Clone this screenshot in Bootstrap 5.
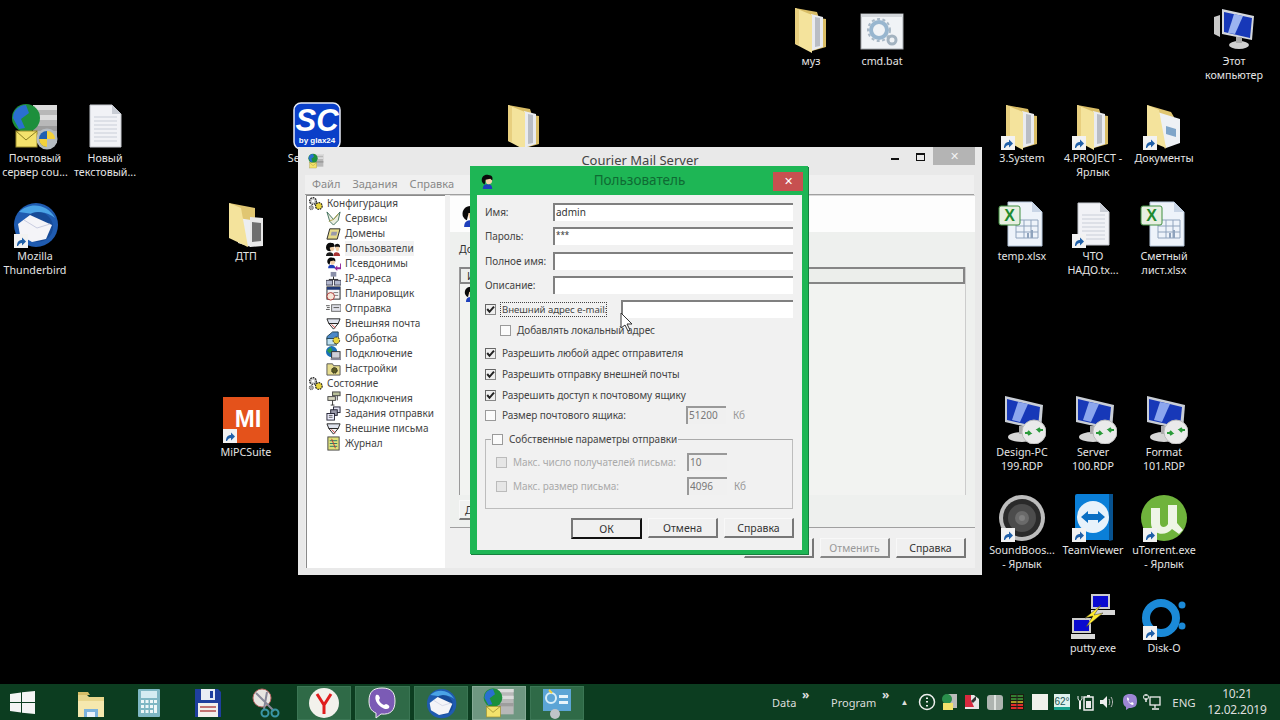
<!DOCTYPE html>
<html lang="ru">
<head>
<meta charset="utf-8">
<title>Courier Mail Server</title>
<link href="https://cdn.jsdelivr.net/npm/bootstrap@5.3.0/dist/css/bootstrap.min.css" rel="stylesheet">
<style>
html,body{height:100%;margin:0;background:#000;overflow:hidden}
.screen{width:1280px;height:720px;font-family:"Noto Sans","Liberation Sans",sans-serif;color:#333}
.desk{position:relative;flex:1 1 auto;background:#000;overflow:hidden}
.ditem{position:absolute;width:70px;color:#e4e4e4;font-size:10.7px;line-height:14px;text-align:center}
.ditem svg{width:48px;height:48px;display:block;margin-bottom:1px}
.ditem span{white-space:nowrap}
.cx35{left:0}.cx105{left:70px}.cx246{left:211px}.cx317{left:282px}.cx524{left:489px}.cx811{left:776px}.cx882{left:847px}.cx1022{left:987px}.cx1093{left:1058px}.cx1164{left:1129px}.cx1234{left:1199px}
.ry5{top:5px}.ry102{top:102px}.ry200{top:200px}.ry396{top:396px}.ry494{top:494px}.ry592{top:592px}
/* main window */
.mainwin{position:absolute;left:298px;top:147px;width:684px;height:428px;background:#e9e9e9;padding:0 7px 7px}
.wtitle{height:28px;display:grid;grid-template-columns:1fr auto 1fr;align-items:center;font-size:13px;color:#444;padding-bottom:0}
.wtext{margin-top:0}
.wtitle>svg{margin-left:3px}
.wctrl{height:18px;align-self:start;gap:0}
.wmin,.wmax{width:24px;height:18px;position:relative}
.wmin::after{content:"";position:absolute;left:6px;top:11px;width:8px;height:2px;background:#111}
.wmax::after{content:"";position:absolute;left:7px;top:6px;width:9px;height:8px;border:1px solid #111;border-top-width:2px}
.wclose{width:42px;height:18px;background:#b4b4b4;color:#f2f2f2;font-size:11px;line-height:18px;text-align:center;margin-right:0}
.wmenu{height:20px;background:#f0f0f0;border-bottom:1px solid #a0a0a0;font-size:11px;color:#888;padding-left:7px;gap:12px;margin-right:1px}
.wbody{height:373px;background:#f0f0f0}
.wtree{width:139px;margin-left:1px;background:#fff;border-left:1px solid #8a8a8a;border-top:1px solid #8a8a8a;padding:0;font-size:10px;color:#444;margin-bottom:0}
.wtree li{height:15px;display:flex;align-items:center;gap:4px;line-height:15px;padding-left:19px;white-space:nowrap}
.wtree li.troot{padding-left:1px;gap:4px}
.wtree li svg{width:15px;height:15px;flex:none}
.wtree li.tsel span{background:#f2f2f2}
.wpane{margin-left:5px;flex:1 1 auto;display:flex;flex-direction:column;background:#f0f0f0}
.phead{height:37px;background:#fdfdfd;padding:9px 0 0 10px;border-top:1px solid #d8d8d8}
.phead svg{width:22px;height:22px;display:block}
.psec{height:296px;background:#eef0ee;padding:10px 9px 0 9px;border-bottom:1px solid #a0a0a0;font-size:10.5px}
.plabel{height:15px;line-height:15px}
.plist{margin-top:10px;height:228px;border-left:1px solid #999;border-right:1px solid #ccc;background:#f2f3f1}
.plhead{height:17px;background:#eceeeb;border:2px solid #858585;border-left-width:1px;padding-left:6px;line-height:14px}
.plrow{padding:2px 0 0 3px}
.plrow svg{width:16px;height:16px;display:block}
.pbtns{gap:6px;padding-top:10px;justify-content:flex-end;padding-right:9px}
/* classic controls */
.xbtn{width:70px;height:20px;padding:0;border-radius:0;border:1px solid #f8f8f8;border-right:2px solid #777;border-bottom:2px solid #777;background:#f0f0f0;color:#333;font-size:10.5px;line-height:16px}
.xbtn:disabled{opacity:1;background:#f0f0f0;color:#999;border-color:#f8f8f8 #888 #888 #f8f8f8}
.xbtn.pdo{margin-top:5px;text-align:left;padding-left:5px}
.xdef{border:2px solid #111;border-top-color:#777;border-left-color:#777;border-right-width:2px;border-bottom-width:2px}
.xin{border-radius:0;border:0;border-top:2px solid #808080;border-left:2px solid #808080;padding:0 1px 2px;height:18px;min-height:0;font-size:10px;line-height:14px;color:#333;background:#fff;box-shadow:none}
.xin:disabled{background:#f0f0f0;color:#777;opacity:1;border-top-color:#999;border-left-color:#999}
.xin.xtiny{font-size:8px;padding-bottom:6px}
.xchk{width:11px;height:11px;margin:0;flex:none;float:none;border-radius:0!important;border:1px solid #9a9a9a;background-color:#fbfbfb;box-shadow:none}
.xchk:checked{background-color:#efefef;border-color:#888;border-top-color:#666;border-left-color:#666;background-size:11px;background-image:url("data:image/svg+xml,%3csvg xmlns='http://www.w3.org/2000/svg' viewBox='0 0 11 11'%3e%3cpath fill='none' stroke='%23222' stroke-width='2' d='M2.2 5l2.3 2.8L9 2.6'/%3e%3c/svg%3e")}
.xchk:disabled{opacity:1;background-color:#e6e6e6;border-color:#bbb}
/* dialog */
.dlg{position:absolute;left:470px;top:166px;width:338px;height:388px;background:#1eb655;padding:0 6px 4px 7px;box-shadow:1px 1px 0 #16803e}
.dtitle{height:29px;display:grid;grid-template-columns:1fr auto 1fr;font-size:13.5px;color:#0f6a33;align-items:center}
.dtitle svg{width:15px;height:15px;margin:1px 0 0 3px;display:block}
.dclose{width:30px;height:19px;background:#c75050;color:#fff;font-size:11px;line-height:18px;text-align:center;align-self:start;margin-top:1px;margin-right:-1px}
.dbody{height:355px;background:#f1f1f1;padding:8px 9px 0 8px;font-size:10px;letter-spacing:-.05px;color:#444;line-height:14px}
.drow{height:18px;margin-bottom:6.4px}
.drow label{width:68px;margin:0}
.drow .xin{width:240px}
.demail{height:18px;margin-top:-.5px}
.demail .xin{width:172px}
.dotted{outline:1px dotted #444;padding:0 1px;margin-left:5px;width:105px;white-space:nowrap;height:13px;line-height:13px;flex:none;font-size:9.6px}
.xlab{margin-left:6px;white-space:nowrap}
.dsub{height:14px;margin:5px 0 0 15px}
.dch{height:14px;margin-top:7px}
.dch1{margin-top:9px}
.dsize{height:18px;margin-top:4px}
.dsize .xin,.dgp .xin{width:40px;margin-left:auto}
.dkb{width:67px;padding-left:7px;color:#999;flex:none}
.dsize .xlab{width:185px}
.dgp{position:relative;margin-top:15px;height:70px;border:1px solid #bdbdbd;border-top-color:#aaa;padding:13px 0 0 10px;color:#aaa}
.dgl{position:absolute;left:5px;top:-8px;background:#f1f1f1;padding:0 1px;color:#444;gap:6px}
.dgr{height:18px;margin-bottom:6px}
.dgr .xlab{width:174px}
.dgr .xin{margin-left:0}
.dgr .dkb{width:auto}
.dbtns{gap:6px;margin-top:9px;padding-right:0;margin-right:-1px;justify-content:flex-end}
.dbtns .xdef{width:71px;height:21px}
.cursor{position:absolute;left:620px;top:312px;width:14px;height:20px}
/* taskbar */
.tbar{height:36px;flex:none;background:#0c3d20;color:#ddd;font-size:11px}
.tstart{width:46px;padding-left:10px}
.tstart svg{width:25px;height:23px;display:block}
.tgrip{width:4px;height:28px;background-image:radial-gradient(#4a7058 .6px,transparent .7px);background-size:2px 2px;flex:none}
.tgrip1{margin:0 10px 0 4px}
.ttask{width:54.25px;height:34px;margin-right:4px;margin-top:2px;display:flex;align-items:center;justify-content:center;flex:none}
.ttask svg{width:32px;height:32px;display:block}
.ton{background:#2f6a47;box-shadow:inset 0 0 0 1px #3b7654}
.tact{background:#6f9781;box-shadow:inset 0 0 0 1px #86aa96}
.ttray{margin-left:auto;width:520px;flex:none}
.tdata{width:30px;margin-left:8px;padding-top:2px}
.tprog{width:51px;margin-left:7px;padding-top:2px}
.tmore{width:18px;font-size:12px;line-height:10px;align-self:flex-start;margin-top:4px;font-weight:700;letter-spacing:-1px}
.tmore2{width:16px}
.tup{width:18px;text-align:center;font-size:8px;padding-left:0;padding-right:5px;color:#ddd}
.tslot{width:22.5px;display:flex;justify-content:center;flex:none}
.tslot svg{width:18px;height:18px;display:block}
.teng{width:41px;text-align:center;flex:none;padding-top:2px;font-size:11.5px}
.tclock{width:65px;text-align:center;line-height:16px;flex:none;font-size:12px;letter-spacing:-.2px}
</style>
</head>
<body>
<svg width="0" height="0" class="position-absolute">
<defs>
<symbol id="short" viewBox="0 0 14 14"><rect width="14" height="14" fill="#f2f2f2"/><path d="M3 12c0-4 2-6 5-6V3.500l4 4-4 4V9c-2 0-3 1-4 3z" fill="#1f5fa8"/></symbol>
<symbol id="folder" viewBox="0 0 48 48"><path d="M8 3l22 4 2 6 7 1v28l-14 4z" fill="#d9bd66"/><path d="M24 9l12 3v30l-12 4z" fill="#e9ebef"/><path d="M28 12l5 1v28l-5 1z" fill="#b9bdc4"/><path d="M8 3l17 7v38L8 39z" fill="#f4e39c"/><path d="M8 3l4 2v35l-4-1z" fill="#e8cf7f"/></symbol>
<symbol id="folderdoc" viewBox="0 0 48 48"><path d="M7 3l24 7 3 5v20l-9 12z" fill="#e0c672"/><path d="M14 9l26 8v24l-14 5z" fill="#eef1f5"/><path d="M26 24l10 3v8l-10-3z" fill="#7fa5c9"/><path d="M7 3l12 5 7 38L7 38z" fill="#f4e39c"/></symbol>
<symbol id="folderdtp" viewBox="0 0 48 48"><path d="M7 3l26 5v12l-8 27z" fill="#e0c672"/><path d="M16 18l13 2v27l-13-4z" fill="#eceef1"/><path d="M28 17l13 1v28l-13 1z" fill="#e8e8e8"/><path d="M30 22l9 1v18l-9 1z" fill="#6e6e6e"/><path d="M7 3l12 5 7 39L7 38z" fill="#f4e39c"/></symbol>
<symbol id="doc" viewBox="0 0 48 48"><path d="M9 3h22l9 9v33H9z" fill="#f1f2f6" stroke="#c5c8ce"/><path d="M31 3v9h9z" fill="#c8ccd4"/><path d="M13 15h23M13 19h23M13 23h23M13 27h23M13 31h23M13 35h23M13 39h23" stroke="#c9ced8"/></symbol>
<symbol id="xls" viewBox="0 0 48 48"><path d="M10 2h24l10 10v34H10z" fill="#eef3fa" stroke="#b7c8dd"/><path d="M34 2v10h10z" fill="#c9d5e6"/><path d="M18 20h22v18H18zM18 26h22M18 32h22M26 20v18M33 20v18" fill="none" stroke="#8fa3bd"/><path d="M29 38v-5h2v5zM33 38v-8h2v8z" fill="#8fa3bd"/><rect x="1" y="6" width="21" height="19" rx="2" fill="#e7efe1" stroke="#3f8f3f"/><text x="11.500" y="21" text-anchor="middle" font-family="Liberation Sans" font-weight="700" font-size="16" fill="#1e8a2f">X</text></symbol>
<symbol id="gearbat" viewBox="0 0 48 48"><rect x="3" y="9" width="42" height="35" fill="#f0f3f6" stroke="#a5a9ae"/><rect x="3" y="9" width="42" height="3" fill="#d2d6da"/><circle cx="21" cy="25" r="8" fill="none" stroke="#98b6cf" stroke-width="4"/><circle cx="21" cy="25" r="11" fill="none" stroke="#a8b8c6" stroke-width="2" stroke-dasharray="3 2.500"/><circle cx="34" cy="35" r="4" fill="none" stroke="#a3b3c0" stroke-width="3"/></symbol>
<symbol id="pc" viewBox="0 0 48 48"><path d="M4 12l6-2v22l-6-3z" fill="#c9c9c9"/><path d="M12 4l32 7-2 24-30-6z" fill="#d4d7dc"/><path d="M14 7l28 6-2 20-26-6z" fill="#1738b8"/><path d="M24 9l9 2-8 18-7-1z" fill="#9cb4f0"/><ellipse cx="29" cy="40" rx="10" ry="4" fill="#cfcfcf"/><path d="M26 32h6v6h-6z" fill="#aaa"/></symbol>
<symbol id="rdp" viewBox="0 0 48 48"><path d="M7 0l38 9-2 25-36-8z" fill="#c9ced6"/><path d="M9 3l33 8-2 20-31-7z" fill="#1738b8"/><path d="M20 6l10 2-8 18-8-2z" fill="#8ca6ee"/><ellipse cx="24" cy="41" rx="14" ry="5" fill="#d6d6d6"/><path d="M21 30h7v8h-7z" fill="#aaa"/><circle cx="36" cy="36" r="12" fill="#eaeaea" stroke="#bbb"/><path d="M27 37h5l-2-2M45 34h-5l2 2M33 37l-3 2M39 34l3-2" stroke="#2a9a3a" stroke-width="2" fill="none"/></symbol>
<symbol id="speaker" viewBox="0 0 48 48"><circle cx="24" cy="24" r="23" fill="#bdbdbd"/><circle cx="24" cy="24" r="19" fill="#2a2a2a"/><circle cx="24" cy="24" r="14" fill="#4c4c4c"/><circle cx="24" cy="24" r="7" fill="#6a6a6a"/><circle cx="24" cy="24" r="3" fill="#808080"/></symbol>
<symbol id="tv" viewBox="0 0 48 48"><rect x="6" y="0" width="38" height="46" rx="2" fill="#0a7fd8"/><path d="M40 0h4v46l-4 1z" fill="#07528f"/><circle cx="24" cy="23" r="16" fill="#e7f2fb"/><path d="M12 23l7-6v3h10v-3l7 6-7 6v-3H19v3z" fill="#0a6fc4"/></symbol>
<symbol id="ut" viewBox="0 0 48 48"><circle cx="24" cy="24" r="23" fill="#6fb33c"/><path d="M11 14h9v15c0 5 6 5 8 1V11h9v18l6 7-4 4-7-5c-6 8-21 6-21-6z" fill="#eef5e6"/></symbol>
<symbol id="putty" viewBox="0 0 48 48"><rect x="22" y="2" width="19" height="15" fill="#ccc"/><rect x="24" y="4" width="15" height="11" fill="#0a0ad0"/><rect x="22" y="18" width="24" height="5" fill="#d8d8d8"/><rect x="3" y="26" width="19" height="15" fill="#ccc"/><rect x="5" y="28" width="15" height="11" fill="#0a0ad0"/><rect x="2" y="42" width="24" height="5" fill="#d8d8d8"/><path d="M32 13L16 26l8-2-7 11 17-14-9 2z" fill="#ffea30" stroke="#333" stroke-width=".5"/></symbol>
<symbol id="disko" viewBox="0 0 48 48"><circle cx="21" cy="26" r="15" fill="none" stroke="#1b8ad8" stroke-width="8"/><circle cx="42" cy="13" r="3.500" fill="#1b8ad8"/><circle cx="42" cy="34" r="3.500" fill="#1b8ad8"/></symbol>
<symbol id="tbird" viewBox="0 0 48 48"><circle cx="25" cy="25" r="22" fill="#1f5bb0"/><path d="M8 12c10-10 28-9 36 6-6-5-14-7-22-4z" fill="#4aa3e6"/><circle cx="27" cy="27" r="15" fill="#164a97"/><path d="M7 24l12-9 22 10-6 14-14 3-12-7z" fill="#f4f4f8"/><path d="M13 20l13 8 13-4" fill="none" stroke="#c8cce0"/></symbol>
<symbol id="mailsrv" viewBox="0 0 48 48"><rect x="22" y="3" width="24" height="38" fill="#b8b8b8"/><path d="M22 3h24v5H22zM22 13h24v5H22z" fill="#dcdcdc"/><path d="M22 24h24v5H22z" fill="#9d9d9d"/><circle cx="15" cy="16" r="14" fill="#1d8f3c"/><path d="M2 16A13 13 0 0 1 15 3l3 8-8 6 4 9-6 1z" fill="#2a6fd0"/><rect x="5" y="29" width="21" height="16" fill="#f4e26c" stroke="#9d8e2c"/><path d="M5 29l10 9 11-9" fill="none" stroke="#8a7d22"/></symbol>
<symbol id="mailsrvs" viewBox="0 0 48 48"><use href="#mailsrv" width="48" height="48"/><circle cx="36" cy="37" r="10.500" fill="#b5bcc2"/><path d="M36 29v16a8 8 0 0 1 0-16" fill="#1f5fb0"/><path d="M36 29a8 8 0 0 1 8 8h-8zM28 37h8v8a8 8 0 0 1-8-8z" fill="#f4d23c"/></symbol>
<symbol id="user" viewBox="0 0 16 16"><path d="M3 16c0-4 2-5 5-5s5 1 5 5z" fill="#1d3fbb"/><path d="M2 8C1 3 5 0 9 1c4 0 5 3 4 6l-2-1-5 1-1 4C4 11 3 10 2 8z" fill="#0a0a0a"/><path d="M6 6l5-1 2 2c0 3-2 4-4 4-2 0-3-2-3-5z" fill="#f3d0a8"/></symbol>
<symbol id="users" viewBox="0 0 16 16"><path d="M0 16c0-3 2-4 4-4s4 1 4 4z" fill="#1b1b1b"/><path d="M0 7c0-4 3-6 6-5 3 0 3 2 3 4l-3 1-1 4C2 11 0 10 0 7z" fill="#0a0a0a"/><path d="M4 7l4-1 1 2c0 2-2 3-3 3-1 0-2-2-2-4z" fill="#f3d0a8"/><path d="M8 16c0-3 1-4 3-4s4 1 4 4z" fill="#a33"/><path d="M9 5c1-3 6-3 6 1l-1 1h-4z" fill="#111"/><path d="M10 6h4v3c0 1-1 2-2 2s-2-2-2-5z" fill="#f3d0a8"/></symbol>
<symbol id="alias" viewBox="0 0 16 16"><use href="#user" width="12" height="14"/><path d="M15 8v4h-3v-2l-3 3 3 3v-2h4V8z" fill="#93289a"/></symbol>
<symbol id="gears" viewBox="0 0 18 18"><circle cx="6" cy="6" r="4" fill="#ccc" stroke="#222" stroke-width="1.500" stroke-dasharray="2 1"/><circle cx="6" cy="6" r="1.500" fill="#fff"/><circle cx="13" cy="12" r="4" fill="#e9d53b" stroke="#222" stroke-width="1.500" stroke-dasharray="2 1"/><circle cx="4" cy="14" r="2.500" fill="#aaa" stroke="#222" stroke-dasharray="1 1"/></symbol>
<symbol id="svc" viewBox="0 0 16 16"><path d="M1 1l7 8 7-8-2 9-5 5-4-4z" fill="#eceee0" stroke="#3f6e5a"/><path d="M3 11l5-2 5-6" stroke="#b0a44a" fill="none"/></symbol>
<symbol id="dom" viewBox="0 0 16 16"><path d="M4 3h11l-3 11H1z" fill="#e8dc8a" stroke="#222"/><path d="M6 6h6l-1 4H5z" fill="#99a"/></symbol>
<symbol id="ip" viewBox="0 0 16 16"><rect x="5" y="1" width="6" height="5" fill="#8a8fa8"/><path d="M8 6v3M3 9h10" stroke="#222"/><rect x="0" y="10" width="7" height="5" fill="#b4b9cf" stroke="#445"/><rect x="9" y="10" width="7" height="5" fill="#b4b9cf" stroke="#445"/></symbol>
<symbol id="sched" viewBox="0 0 16 16"><rect x="1" y="1" width="14" height="13" fill="#f4f4f4" stroke="#222"/><rect x="1" y="1" width="14" height="3" fill="#223a78"/><path d="M8 7h5M8 10h5" stroke="#777"/><circle cx="5" cy="11" r="4" fill="#f6e7d8" stroke="#a33"/></symbol>
<symbol id="send" viewBox="0 0 16 16"><rect x="6" y="4" width="10" height="7" fill="#e2e2ea" stroke="#666"/><path d="M8 7h6" stroke="#555"/><path d="M0 5h4M1 7h3M0 9h4" stroke="#555"/></symbol>
<symbol id="ext" viewBox="0 0 16 16"><path d="M1 3h14l-2 5H3z" fill="#dfe3ee" stroke="#222"/><path d="M3 8l5 6 5-6z" fill="#f4f4f4" stroke="#222"/><path d="M6 9l4 4" stroke="#c33"/></symbol>
<symbol id="proc" viewBox="0 0 16 16"><path d="M1 6l6-5h6v8H1z" fill="#4b88c8" stroke="#245"/><rect x="1" y="8" width="10" height="7" fill="#bfe0f0" stroke="#245"/><circle cx="11" cy="10" r="3.500" fill="#e9d53b" stroke="#222" stroke-dasharray="2 1"/></symbol>
<symbol id="conn" viewBox="0 0 16 16"><circle cx="6" cy="6" r="6" fill="#1a6fb8"/><path d="M1 5l4-4 2 4-3 3z" fill="#2d9a4c"/><rect x="6" y="6" width="9" height="7" fill="#cfcfd8" stroke="#333"/><rect x="5" y="13" width="11" height="2" fill="#889"/></symbol>
<symbol id="cfg" viewBox="0 0 16 16"><path d="M1 3h6l1 2h7v10H1z" fill="#e6dc8e" stroke="#555"/><circle cx="9" cy="10" r="3" fill="#5a5a22" stroke="#222" stroke-dasharray="1.500 1"/></symbol>
<symbol id="plug" viewBox="0 0 16 16"><rect x="7" y="1" width="8" height="4" fill="#b8bf9a" stroke="#444"/><rect x="2" y="6" width="8" height="4" fill="#d8d8c0" stroke="#444"/><path d="M7 10v5M5 15h4M12 5v5" stroke="#333"/></symbol>
<symbol id="task" viewBox="0 0 16 16"><rect x="8" y="1" width="7" height="6" fill="#dde" stroke="#223"/><rect x="5" y="4" width="7" height="6" fill="#99a" stroke="#223"/><rect x="1" y="8" width="8" height="7" fill="#eef" stroke="#223"/><path d="M3 10h4M3 12h4" stroke="#555"/></symbol>
<symbol id="journal" viewBox="0 0 16 16"><rect x="2" y="1" width="12" height="14" fill="#dfe07a" stroke="#444"/><path d="M4 5h8M4 8h8M4 11h8" stroke="#276"/><path d="M6 3l4 10" stroke="#b33"/></symbol>
<symbol id="tc" viewBox="0 0 32 32"><rect x="5" y="2" width="22" height="28" rx="1" fill="#7fb7c4"/><rect x="8" y="4" width="16" height="7" fill="#d4ecf2"/><path d="M8 13h3v3H8zM12.500 13h3v3h-3zM17 13h3v3h-3zM21 13h3v3h-3zM8 18h3v3H8zM12.500 18h3v3h-3zM17 18h3v3h-3zM21 18h3v8h-3zM8 23h3v3H8zM12.500 23h3v3h-3zM17 23h3v3h-3z" fill="#eef7f9"/></symbol>
<symbol id="tex" viewBox="0 0 32 32"><path d="M3 8h9l2 2h15v20H3z" fill="#e8d68c"/><path d="M3 5h10l2 3H3z" fill="#d7be68"/><rect x="3" y="14" width="26" height="16" fill="#f5e8ae"/><path d="M9 22h14v8H9z" fill="#7bb3dd"/><path d="M12 25h8v5h-8z" fill="#eaf3fb"/></symbol>
<symbol id="tsave" viewBox="0 0 32 32"><path d="M3 2h23l3 3v25H3z" fill="#1f3f9e"/><rect x="9" y="2" width="14" height="11" fill="#e9edf5"/><rect x="18" y="4" width="3" height="7" fill="#1f3f9e"/><rect x="6" y="16" width="20" height="14" fill="#f2f0ec"/><path d="M8 20h16M8 24h16" stroke="#b24a4a" stroke-width="1.500"/></symbol>
<symbol id="tsnip" viewBox="0 0 32 32"><circle cx="12" cy="11" r="9" fill="#e8e6e2" stroke="#b66"/><path d="M6 6l18 18M17 5L14 22" stroke="#889" stroke-width="2"/><circle cx="25" cy="26" r="3.500" fill="none" stroke="#3a96a6" stroke-width="2"/><circle cx="15" cy="26" r="3.500" fill="none" stroke="#3a96a6" stroke-width="2"/></symbol>
<symbol id="tyan" viewBox="0 0 32 32"><circle cx="16" cy="16" r="15" fill="#f2f1ec"/><path d="M9 7l7 11 7-11M16 18v9" fill="none" stroke="#e01d1d" stroke-width="3"/></symbol>
<symbol id="tvib" viewBox="0 0 32 32"><path d="M16 1C7 1 3 5 3 14c0 6 2 10 7 12v5l5-4c10 1 14-4 14-13S25 1 16 1z" fill="#7b5bb5" stroke="#eee" stroke-width="1"/><path d="M10 8c2-1 3 0 4 3l-1 2c1 3 3 4 5 5l2-1c3 1 4 2 3 4-2 2-5 1-8-1-4-3-7-8-5-12z" fill="#fff"/></symbol>
<symbol id="tcp" viewBox="0 0 32 32"><rect x="2" y="2" width="28" height="22" fill="#5ca5d6"/><circle cx="10" cy="11" r="5" fill="none" stroke="#d8eef8" stroke-width="2"/><path d="M8 3l3 3" stroke="#f4d23c" stroke-width="2"/><path d="M18 8h9v3h-9zM18 14h9v3h-9z" fill="#e8f4fb"/><circle cx="14" cy="27" r="5" fill="#bfc4c8"/></symbol>
<symbol id="tr-info" viewBox="0 0 18 18"><circle cx="9" cy="9" r="7.500" fill="none" stroke="#eee" stroke-width="1.500"/><path d="M9 4.500v1.500M9 8v1.500M9 12v1.500" stroke="#eee" stroke-width="2"/></symbol>
<symbol id="tr-mail" viewBox="0 0 18 18"><rect x="7" y="1" width="9" height="14" fill="#bbb"/><circle cx="6" cy="6" r="5" fill="#2a8f4c"/><rect x="2" y="10" width="10" height="7" fill="#f4e26c"/></symbol>
<symbol id="tr-kasp" viewBox="0 0 18 18"><path d="M2 2h9l5 4v10H2z" fill="#e6e6e6"/><path d="M2 2h6v5l3 7H2z" fill="#d8293e"/><path d="M8 8l5-5v4l-3 3z" fill="#333"/></symbol>
<symbol id="tr-gray" viewBox="0 0 18 18"><rect x="1" y="2" width="16" height="15" rx="3" fill="#aeb4b0"/><path d="M8 2h2v15H8z" fill="#dfe3df"/></symbol>
<symbol id="tr-grid" viewBox="0 0 18 18"><rect x="2" y="1" width="14" height="16" fill="#1c1c10"/><path d="M3 3h12M3 6h12" stroke="#3da03d" stroke-width="1.500"/><path d="M3 9h12" stroke="#d9c42a" stroke-width="1.500"/><path d="M3 12h12M3 15h12" stroke="#e02b2b" stroke-width="2"/><path d="M9 1v16" stroke="#222"/></symbol>
<symbol id="tr-62" viewBox="0 0 18 18"><rect x="1" y="1" width="16" height="16" fill="#dff2ee"/><rect x="1" y="14" width="16" height="3" fill="#19a08c"/><text x="9" y="12" text-anchor="middle" font-family="Liberation Sans" font-size="10" fill="#255">62°</text></symbol>
<symbol id="tr-bat" viewBox="0 0 18 18"><rect x="8" y="4" width="9" height="13" fill="none" stroke="#eee" stroke-width="1.500"/><rect x="11" y="2" width="3" height="2" fill="#eee"/><rect x="10" y="8" width="5" height="7" fill="#eee"/><path d="M2 3v3l1.500 2v8h1V8L6 6V3" stroke="#eee" fill="none"/></symbol>
<symbol id="tr-vol" viewBox="0 0 18 18"><path d="M2 7h3l4-4v12l-4-4H2z" fill="#eee"/><path d="M11 6c1 2 1 4 0 6M13 4c2 3 2 7 0 10" fill="none" stroke="#bbb"/></symbol>
<symbol id="tr-vib" viewBox="0 0 18 18"><path d="M9 1C4 1 2 3 2 8c0 3 1 5 3 6v3l3-2c6 0 8-2 8-7S14 1 9 1z" fill="#9c86d4"/><path d="M6 5c1-1 2 0 2 2l-1 1c1 1 2 2 3 2l1-1c2 1 2 2 1 3-2 0-6-3-6-7z" fill="#fff"/></symbol>
<symbol id="tr-net" viewBox="0 0 18 18"><rect x="7" y="4" width="10" height="8" fill="none" stroke="#eee" stroke-width="1.300"/><path d="M12 12v3M9 16h7" stroke="#eee" stroke-width="1.300"/><path d="M3 9V5M3 2v1" stroke="#eee" stroke-width="1.500"/><circle cx="3" cy="4" r="2.500" fill="none" stroke="#eee"/></symbol>
</defs>
</svg>

<div class="screen d-flex flex-column">
  <div class="desk">
    <div class="ditem cx35 ry102 d-flex flex-column align-items-center"><svg viewBox="0 0 48 48"><use href="#mailsrvs"/></svg><span>Почтовый<br>сервер cou...</span></div>
    <div class="ditem cx105 ry102 d-flex flex-column align-items-center"><svg viewBox="0 0 48 48"><use href="#doc"/></svg><span>Новый<br>текстовый...</span></div>
    <div class="ditem cx35 ry200 d-flex flex-column align-items-center"><svg viewBox="0 0 48 48"><use href="#tbird"/><use href="#short" x="3" y="34" width="14" height="14"/></svg><span>Mozilla<br>Thunderbird</span></div>
    <div class="ditem cx246 ry200 d-flex flex-column align-items-center"><svg viewBox="0 0 48 48"><use href="#folderdtp"/></svg><span>ДТП</span></div>
    <div class="ditem cx317 ry102 d-flex flex-column align-items-center"><svg viewBox="0 0 48 48"><rect x="1" y="1" width="46" height="46" rx="7" fill="#0a3fc8" stroke="#e8ecf8" stroke-width="1.500"/><text x="24" y="29" text-anchor="middle" font-family="Liberation Sans" font-weight="700" font-style="italic" font-size="31" fill="#fff">SC</text><text x="24" y="41" text-anchor="middle" font-family="Liberation Sans" font-weight="700" font-size="8" fill="#fff">by glax24</text></svg><span>Server Conf</span></div>
    <div class="ditem cx524 ry102 d-flex flex-column align-items-center"><svg viewBox="0 0 48 48"><use href="#folder"/></svg></div>
    <div class="ditem cx246 ry396 d-flex flex-column align-items-center"><svg viewBox="0 0 48 48"><rect x="1" y="1" width="46" height="46" fill="#e4521b"/><text x="26" y="31" text-anchor="middle" font-family="Liberation Sans" font-weight="700" font-size="24" fill="#fff">MI</text><use href="#short" x="1" y="33" width="14" height="14"/></svg><span>MiPCSuite</span></div>
    <div class="ditem cx811 ry5 d-flex flex-column align-items-center"><svg viewBox="0 0 48 48"><use href="#folder"/></svg><span>муз</span></div>
    <div class="ditem cx882 ry5 d-flex flex-column align-items-center"><svg viewBox="0 0 48 48"><use href="#gearbat"/></svg><span>cmd.bat</span></div>
    <div class="ditem cx1234 ry5 d-flex flex-column align-items-center"><svg viewBox="0 0 48 48"><use href="#pc"/></svg><span>Этот<br>компьютер</span></div>
    <div class="ditem cx1022 ry102 d-flex flex-column align-items-center"><svg viewBox="0 0 48 48"><use href="#folder"/><use href="#short" x="3" y="34" width="14" height="14"/></svg><span>3.System</span></div>
    <div class="ditem cx1093 ry102 d-flex flex-column align-items-center"><svg viewBox="0 0 48 48"><use href="#folder"/><use href="#short" x="3" y="34" width="14" height="14"/></svg><span>4.PROJECT -<br>Ярлык</span></div>
    <div class="ditem cx1164 ry102 d-flex flex-column align-items-center"><svg viewBox="0 0 48 48"><use href="#folderdoc"/><use href="#short" x="3" y="34" width="14" height="14"/></svg><span>Документы</span></div>
    <div class="ditem cx1022 ry200 d-flex flex-column align-items-center"><svg viewBox="0 0 48 48"><use href="#xls"/></svg><span>temp.xlsx</span></div>
    <div class="ditem cx1093 ry200 d-flex flex-column align-items-center"><svg viewBox="0 0 48 48"><use href="#doc"/><use href="#short" x="3" y="34" width="14" height="14"/></svg><span>ЧТО<br>НАДО.tx...</span></div>
    <div class="ditem cx1164 ry200 d-flex flex-column align-items-center"><svg viewBox="0 0 48 48"><use href="#xls"/></svg><span>Сметный<br>лист.xlsx</span></div>
    <div class="ditem cx1022 ry396 d-flex flex-column align-items-center"><svg viewBox="0 0 48 48"><use href="#rdp"/></svg><span>Design-PC<br>199.RDP</span></div>
    <div class="ditem cx1093 ry396 d-flex flex-column align-items-center"><svg viewBox="0 0 48 48"><use href="#rdp"/></svg><span>Server<br>100.RDP</span></div>
    <div class="ditem cx1164 ry396 d-flex flex-column align-items-center"><svg viewBox="0 0 48 48"><use href="#rdp"/></svg><span>Format<br>101.RDP</span></div>
    <div class="ditem cx1022 ry494 d-flex flex-column align-items-center"><svg viewBox="0 0 48 48"><use href="#speaker"/><use href="#short" x="3" y="34" width="14" height="14"/></svg><span>SoundBoos...<br>- Ярлык</span></div>
    <div class="ditem cx1093 ry494 d-flex flex-column align-items-center"><svg viewBox="0 0 48 48"><use href="#tv"/><use href="#short" x="3" y="34" width="14" height="14"/></svg><span>TeamViewer</span></div>
    <div class="ditem cx1164 ry494 d-flex flex-column align-items-center"><svg viewBox="0 0 48 48"><use href="#ut"/><use href="#short" x="3" y="34" width="14" height="14"/></svg><span>uTorrent.exe<br>- Ярлык</span></div>
    <div class="ditem cx1093 ry592 d-flex flex-column align-items-center"><svg viewBox="0 0 48 48"><use href="#putty"/></svg><span>putty.exe</span></div>
    <div class="ditem cx1164 ry592 d-flex flex-column align-items-center"><svg viewBox="0 0 48 48"><use href="#disko"/><use href="#short" x="3" y="34" width="14" height="14"/></svg><span>Disk-O</span></div>

    <div class="mainwin d-flex flex-column">
      <div class="wtitle">
        <svg width="16" height="16" viewBox="0 0 48 48"><use href="#mailsrv"/></svg>
        <div class="wtext">Courier Mail Server</div>
        <div class="wctrl d-flex justify-content-end"><span class="wmin"></span><span class="wmax"></span><span class="wclose">✕</span></div>
      </div>
      <div class="wmenu d-flex align-items-center"><span>Файл</span><span>Задания</span><span>Справка</span></div>
      <div class="wbody d-flex">
        <ul class="wtree list-unstyled">
          <li class="troot"><svg><use href="#gears"/></svg><span>Конфигурация</span></li>
          <li><svg><use href="#svc"/></svg><span>Сервисы</span></li>
          <li><svg><use href="#dom"/></svg><span>Домены</span></li>
          <li class="tsel"><svg><use href="#users"/></svg><span>Пользователи</span></li>
          <li><svg><use href="#alias"/></svg><span>Псевдонимы</span></li>
          <li><svg><use href="#ip"/></svg><span>IP-адреса</span></li>
          <li><svg><use href="#sched"/></svg><span>Планировщик</span></li>
          <li><svg><use href="#send"/></svg><span>Отправка</span></li>
          <li><svg><use href="#ext"/></svg><span>Внешняя почта</span></li>
          <li><svg><use href="#proc"/></svg><span>Обработка</span></li>
          <li><svg><use href="#conn"/></svg><span>Подключение</span></li>
          <li><svg><use href="#cfg"/></svg><span>Настройки</span></li>
          <li class="troot"><svg><use href="#gears"/></svg><span>Состояние</span></li>
          <li><svg><use href="#plug"/></svg><span>Подключения</span></li>
          <li><svg><use href="#task"/></svg><span>Задания отправки</span></li>
          <li><svg><use href="#ext"/></svg><span>Внешние письма</span></li>
          <li><svg><use href="#journal"/></svg><span>Журнал</span></li>
        </ul>
        <div class="wpane">
          <div class="phead"><svg viewBox="0 0 16 16"><use href="#user"/></svg></div>
          <div class="psec">
            <div class="plabel">Доступ</div>
            <div class="plist">
              <div class="plhead">Имя</div>
              <div class="plrow"><svg viewBox="0 0 16 16"><use href="#user"/></svg></div>
            </div>
            <button type="button" class="btn xbtn pdo">Добавить</button>
          </div>
          <div class="pbtns d-flex">
            <button type="button" class="btn xbtn">Применить</button>
            <button type="button" class="btn xbtn" disabled>Отменить</button>
            <button type="button" class="btn xbtn">Справка</button>
          </div>
        </div>
      </div>
    </div>

    <div class="dlg d-flex flex-column">
      <div class="dtitle">
        <svg viewBox="0 0 16 16"><use href="#user"/></svg>
        <div>Пользователь</div>
        <div class="d-flex justify-content-end"><span class="dclose">✕</span></div>
      </div>
      <div class="dbody">
        <div class="drow d-flex align-items-center"><label>Имя:</label><input class="form-control xin" value="admin"></div>
        <div class="drow d-flex align-items-center"><label>Пароль:</label><input class="form-control xin xtiny" value="***"></div>
        <div class="drow d-flex align-items-center"><label>Полное имя:</label><input class="form-control xin"></div>
        <div class="drow d-flex align-items-center"><label>Описание:</label><input class="form-control xin"></div>
        <div class="demail d-flex align-items-center"><input class="form-check-input xchk" type="checkbox" checked><span class="dotted">Внешний адрес e-mail:</span><input class="form-control xin ms-auto"></div>
        <div class="dsub d-flex align-items-center"><input class="form-check-input xchk" type="checkbox"><span class="xlab">Добавлять локальный адрес</span></div>
        <div class="dch dch1 d-flex align-items-center"><input class="form-check-input xchk" type="checkbox" checked><span class="xlab">Разрешить любой адрес отправителя</span></div>
        <div class="dch d-flex align-items-center"><input class="form-check-input xchk" type="checkbox" checked><span class="xlab">Разрешить отправку внешней почты</span></div>
        <div class="dch d-flex align-items-center"><input class="form-check-input xchk" type="checkbox" checked><span class="xlab">Разрешить доступ к почтовому ящику</span></div>
        <div class="dsize d-flex align-items-center"><input class="form-check-input xchk" type="checkbox"><span class="xlab">Размер почтового ящика:</span><input class="form-control xin" value="51200" disabled><span class="dkb">Кб</span></div>
        <div class="dgp">
          <div class="dgl d-flex align-items-center"><input class="form-check-input xchk" type="checkbox"><span>Собственные параметры отправки</span></div>
          <div class="dgr d-flex align-items-center"><input class="form-check-input xchk" type="checkbox" disabled><span class="xlab">Макс. число получателей письма:</span><input class="form-control xin" value="10" disabled></div>
          <div class="dgr d-flex align-items-center"><input class="form-check-input xchk" type="checkbox" disabled><span class="xlab">Макс. размер письма:</span><input class="form-control xin" value="4096" disabled><span class="dkb">Кб</span></div>
        </div>
        <div class="dbtns d-flex">
          <button type="button" class="btn xbtn xdef">ОК</button>
          <button type="button" class="btn xbtn">Отмена</button>
          <button type="button" class="btn xbtn">Справка</button>
        </div>
      </div>
    </div>
    <svg class="cursor" viewBox="0 0 14 20"><path d="M1 1v15l4-3 3 6 2-1-3-6h5z" fill="#fff" stroke="#333"/></svg>
  </div>

  <div class="tbar d-flex align-items-center">
    <div class="tstart"><svg viewBox="0 0 25 23"><path d="M0 3l11-1.500V11H0zM12 1.300L25 0v11H12zM0 12h11v9.500L0 20zM12 12h13v11l-13-1.300z" fill="#f4f4f4"/></svg></div>
    <div class="tgrip tgrip1"></div>
    <div class="ttask"><svg><use href="#tex"/></svg></div>
    <div class="ttask"><svg><use href="#tc"/></svg></div>
    <div class="ttask"><svg><use href="#tsave"/></svg></div>
    <div class="ttask"><svg><use href="#tsnip"/></svg></div>
    <div class="ttask ton"><svg><use href="#tyan"/></svg></div>
    <div class="ttask ton"><svg><use href="#tvib"/></svg></div>
    <div class="ttask ton"><svg viewBox="0 0 48 48"><use href="#tbird"/></svg></div>
    <div class="ttask tact"><svg viewBox="0 0 48 48"><use href="#mailsrv"/></svg></div>
    <div class="ttask ton"><svg><use href="#tcp"/></svg></div>
    <div class="ttray d-flex align-items-center">
      <div class="tgrip"></div><span class="tdata">Data</span><span class="tmore">»</span>
      <div class="tgrip"></div><span class="tprog">Program</span><span class="tmore tmore2">»</span>
      <span class="tup">▲</span>
      <span class="tslot"><svg><use href="#tr-info"/></svg></span>
      <span class="tslot"><svg><use href="#tr-mail"/></svg></span>
      <span class="tslot"><svg><use href="#tr-kasp"/></svg></span>
      <span class="tslot"><svg><use href="#tr-gray"/></svg></span>
      <span class="tslot"><svg><use href="#tr-grid"/></svg></span>
      <span class="tslot"><svg><rect x="1" y="1" width="16" height="16" fill="#f1f1ec"/></svg></span>
      <span class="tslot"><svg><use href="#tr-62"/></svg></span>
      <span class="tslot"><svg><use href="#tr-bat"/></svg></span>
      <span class="tslot"><svg><use href="#tr-vol"/></svg></span>
      <span class="tslot"><svg><use href="#tr-vib"/></svg></span>
      <span class="tslot"><svg><use href="#tr-net"/></svg></span>
      <span class="teng">ENG</span>
      <span class="tclock">10:21<br>12.02.2019</span>
    </div>
  </div>
</div>
<script src="https://cdn.jsdelivr.net/npm/bootstrap@5.3.0/dist/js/bootstrap.bundle.min.js"></script>
</body>
</html>
